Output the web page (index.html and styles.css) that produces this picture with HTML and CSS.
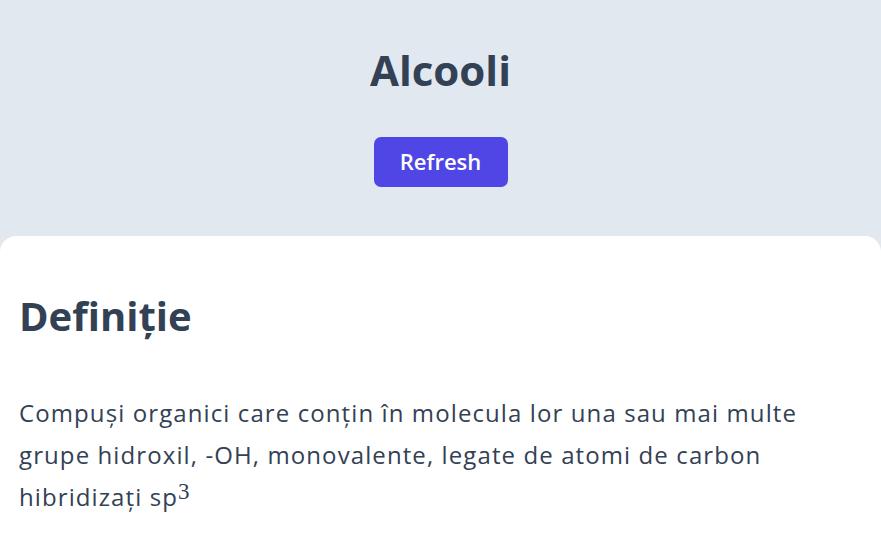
FILE: index.html
```html
<!DOCTYPE html>
<html lang="ro">
<head>
<meta charset="utf-8">
<title>Alcooli</title>
<link rel="stylesheet" href="styles.css">
</head>
<body>
<header class="top">
  <h1 class="title">Alcooli</h1>
  <button class="refresh">Refresh</button>
</header>
<main class="card">
  <h2 class="heading">Definiție</h2>
  <p class="text">Compuși organici care conțin în molecula lor una sau mai multe grupe hidroxil, -OH, monovalente, legate de atomi de carbon hibridizați sp<sup class="sup">3</sup></p>
</main>
</body>
</html>
```
FILE: styles.css
```css
html, body {
  margin: 0;
  padding: 0;
  height: 100%;
}
body {
  display: flex;
  flex-direction: column;
  background: #e2e8f0;
  font-family: "Open Sans", "Noto Sans", sans-serif;
  color: #334155;
  overflow: hidden;
}
.top {
  display: flex;
  flex-direction: column;
  align-items: center;
  padding: 43px 0 49px;
}
.title {
  margin: 0;
  font-size: 42px;
  line-height: 54px;
  font-weight: 700;
  color: #334155;
}
.refresh {
  margin-top: 40px;
  width: 134px;
  height: 50px;
  padding: 0 0 3px;
  border: none;
  border-radius: 7px;
  background: #4f46e5;
  color: #fff;
  font-family: inherit;
  font-size: 22px;
  font-weight: 600;
}
.card {
  flex: 1;
  background: #fff;
  border-radius: 16px 16px 0 0;
  padding: 48px 19px 0;
}
.heading {
  margin: 0;
  font-size: 40px;
  line-height: 64px;
  font-weight: 700;
  color: #334155;
}
.text {
  max-width: 820px;
  margin: 44px 0 0;
  font-size: 24px;
  line-height: 42px;
  letter-spacing: 1.1px;
}
.sup {
  display: inline-block;
  font-family: "Liberation Serif", "DejaVu Serif", serif;
  font-size: 23px;
  line-height: 1;
  letter-spacing: 0;
  vertical-align: 7px;
}
```
